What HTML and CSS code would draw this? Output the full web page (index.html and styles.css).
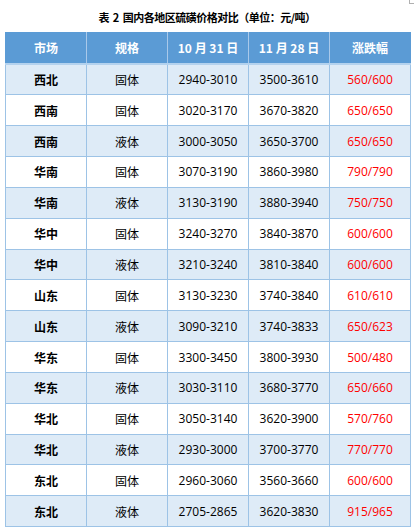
FILE: index.html
```html
<!DOCTYPE html>
<html lang="zh">
<head>
<meta charset="utf-8">
<link rel="stylesheet" href="styles.css">
</head>
<body>
<div class="page">
  <span class="crop"></span>
  <div class="title">表 2 国内各地区硫磺价格对比（单位：元/吨）</div>
  <table class="grid">
    <thead>
      <tr><th>市场</th><th>规格</th><th>10 月 31 日</th><th>11 月 28 日</th><th>涨跌幅</th></tr>
    </thead>
    <tbody>
      <tr class="alt"><td class="mkt">西北</td><td>固体</td><td>2940-3010</td><td>3500-3610</td><td class="chg">560/600</td></tr>
      <tr><td class="mkt">西南</td><td>固体</td><td>3020-3170</td><td>3670-3820</td><td class="chg">650/650</td></tr>
      <tr class="alt"><td class="mkt">西南</td><td>液体</td><td>3000-3050</td><td>3650-3700</td><td class="chg">650/650</td></tr>
      <tr><td class="mkt">华南</td><td>固体</td><td>3070-3190</td><td>3860-3980</td><td class="chg">790/790</td></tr>
      <tr class="alt"><td class="mkt">华南</td><td>液体</td><td>3130-3190</td><td>3880-3940</td><td class="chg">750/750</td></tr>
      <tr><td class="mkt">华中</td><td>固体</td><td>3240-3270</td><td>3840-3870</td><td class="chg">600/600</td></tr>
      <tr class="alt"><td class="mkt">华中</td><td>液体</td><td>3210-3240</td><td>3810-3840</td><td class="chg">600/600</td></tr>
      <tr><td class="mkt">山东</td><td>固体</td><td>3130-3230</td><td>3740-3840</td><td class="chg">610/610</td></tr>
      <tr class="alt"><td class="mkt">山东</td><td>液体</td><td>3090-3210</td><td>3740-3833</td><td class="chg">650/623</td></tr>
      <tr><td class="mkt">华东</td><td>固体</td><td>3300-3450</td><td>3800-3930</td><td class="chg">500/480</td></tr>
      <tr class="alt"><td class="mkt">华东</td><td>液体</td><td>3030-3110</td><td>3680-3770</td><td class="chg">650/660</td></tr>
      <tr><td class="mkt">华北</td><td>固体</td><td>3050-3140</td><td>3620-3900</td><td class="chg">570/760</td></tr>
      <tr class="alt"><td class="mkt">华北</td><td>液体</td><td>2930-3000</td><td>3700-3770</td><td class="chg">770/770</td></tr>
      <tr><td class="mkt">东北</td><td>固体</td><td>2960-3060</td><td>3560-3660</td><td class="chg">600/600</td></tr>
      <tr class="alt"><td class="mkt">东北</td><td>液体</td><td>2705-2865</td><td>3620-3830</td><td class="chg">915/965</td></tr>
    </tbody>
  </table>
</div>
</body>
</html>
```
FILE: styles.css
```css
html, body {
  margin: 0;
  padding: 0;
  background: #ffffff;
}
.page {
  position: relative;
  width: 414px;
  height: 530px;
  overflow: hidden;
  font-family: "Open Sans", "Noto Sans CJK SC", sans-serif;
  color: #000;
}
.crop {
  position: absolute;
  left: 409px;
  top: 0;
  width: 5px;
  height: 3px;
  border-left: 1px solid #b0b0b0;
  border-bottom: 1px solid #b0b0b0;
}
.title {
  height: 32px;
  display: flex;
  align-items: center;
  justify-content: center;
  padding-top: 2px;
  box-sizing: border-box;
  font-family: "Noto Sans CJK SC", sans-serif;
  font-weight: 700;
  font-size: 11px;
  letter-spacing: -0.5px;
  word-spacing: 2px;
}
.grid {
  margin-left: 5px;
  width: 406px;
  border-collapse: collapse;
  table-layout: fixed;
}
.grid th, .grid td {
  border: 1px solid #9dc3e6;
  text-align: center;
  vertical-align: middle;
  padding: 0;
  font-size: 12px;
}
.grid th {
  background: #5b9bd5;
  color: #fff;
  font-family: "Noto Sans CJK SC", sans-serif;
  font-weight: 700;
  height: 29.5px;
  border-top-color: #5b9bd5;
  border-left-color: #a9c9ea;
  border-right-color: #a9c9ea;
  border-bottom: 2px solid #b4d2ee;
}
.grid th:first-child { border-left-color: #5b9bd5; }
.grid th:last-child { border-right-color: #5b9bd5; }
.grid td {
  height: 29.85px;
  background: #fff;
}
.grid tr.alt td {
  background: #deebf7;
}
.grid td.mkt {
  font-family: "Noto Sans CJK SC", sans-serif;
  font-weight: 700;
}
.grid td:nth-child(2) {
  font-family: "Noto Sans CJK SC", sans-serif;
}
.grid td.chg {
  color: #ff0000;
}
```
